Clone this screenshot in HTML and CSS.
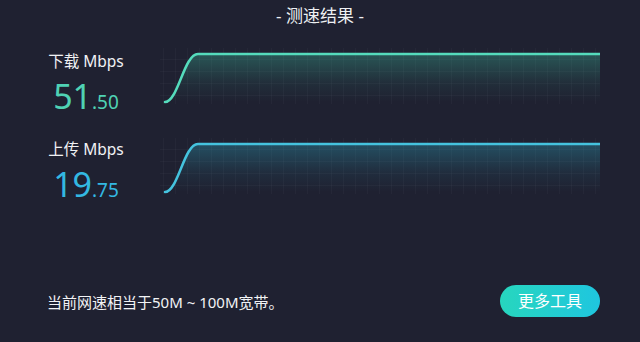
FILE: index.html
```html
<!DOCTYPE html>
<html lang="zh">
<head>
<meta charset="utf-8">
<link rel="stylesheet" href="styles.css">
</head>
<body>
<div class="page">
  <div class="title">- 测速结果 -</div>

  <div class="row row-down">
    <div class="stat">
      <div class="label">下载 Mbps</div>
      <div class="value down"><span class="int">51</span><span class="dec">.50</span></div>
    </div>
    <svg class="chart" width="440" height="60" viewBox="0 0 440 60">
      <defs>
        <pattern id="grid" width="12" height="12" patternUnits="userSpaceOnUse" x="4" y="2">
          <path d="M12 0 V12 M0 12 H12" fill="none" stroke="rgba(255,255,255,0.05)" stroke-width="1"/>
        </pattern>
        <linearGradient id="fillDown" x1="0" y1="0" x2="0" y2="1">
          <stop offset="0" stop-color="#3fc9a6" stop-opacity="0.32"/>
          <stop offset="0.6" stop-color="#3fc9a6" stop-opacity="0.08"/>
          <stop offset="1" stop-color="#3fc9a6" stop-opacity="0"/>
        </linearGradient>
      </defs>
      <rect x="0" y="2" width="440" height="56" fill="url(#grid)"/>
      <path d="M5 56 C18 56 24 8 38 8 L440 8 L440 56 Z" fill="url(#fillDown)"/>
      <path d="M5 56 C18 56 24 8 38 8 L440 8" fill="none" stroke="#55dbbc" stroke-width="2.5" stroke-linecap="round"/>
    </svg>
  </div>

  <div class="row row-up">
    <div class="stat">
      <div class="label">上传 Mbps</div>
      <div class="value up"><span class="int">19</span><span class="dec">.75</span></div>
    </div>
    <svg class="chart" width="440" height="60" viewBox="0 0 440 60">
      <defs>
        <pattern id="grid2" width="12" height="12" patternUnits="userSpaceOnUse" x="4" y="2">
          <path d="M12 0 V12 M0 12 H12" fill="none" stroke="rgba(255,255,255,0.05)" stroke-width="1"/>
        </pattern>
        <linearGradient id="fillUp" x1="0" y1="0" x2="0" y2="1">
          <stop offset="0" stop-color="#2fb3cc" stop-opacity="0.32"/>
          <stop offset="0.6" stop-color="#2fb3cc" stop-opacity="0.08"/>
          <stop offset="1" stop-color="#2fb3cc" stop-opacity="0"/>
        </linearGradient>
      </defs>
      <rect x="0" y="2" width="440" height="56" fill="url(#grid2)"/>
      <path d="M5 56 C18 56 24 8 38 8 L440 8 L440 56 Z" fill="url(#fillUp)"/>
      <path d="M5 56 C18 56 24 8 38 8 L440 8" fill="none" stroke="#45c3de" stroke-width="2.5" stroke-linecap="round"/>
    </svg>
  </div>

  <div class="footer">
    <div class="note">当前网速相当于50M ~ 100M宽带。</div>
    <div class="btn">更多工具</div>
  </div>
</div>
</body>
</html>
```

FILE: styles.css
```css
html, body {
  margin: 0;
  padding: 0;
  background: #1f2131;
}
.page {
  width: 640px;
  height: 342px;
  background: #1f2131;
  color: #f2f3f5;
  font-family: "Noto Sans", "Noto Sans CJK SC", sans-serif;
  overflow: hidden;
}
.title {
  height: 32px;
  line-height: 32px;
  text-align: center;
  font-size: 17px;
  color: #eef0f3;
}
.row {
  display: flex;
  height: 60px;
}
.row-down {
  margin-top: 14px;
}
.row-up {
  margin-top: 30px;
}
.stat {
  width: 80px;
  margin-left: 46px;
  margin-right: 34px;
  display: flex;
  flex-direction: column;
  align-items: center;
}
.label {
  margin-top: 4px;
  font-size: 15.5px;
  line-height: 22px;
  white-space: nowrap;
  color: #f0f1f4;
}
.row-up .label {
  margin-top: 2px;
}
.value {
  margin-top: 5px;
  line-height: 38px;
  white-space: nowrap;
}
.value .int {
  font-size: 34px;
}
.value .dec {
  font-size: 19px;
}
.value.down {
  color: #4fd2b4;
}
.value.up {
  color: #33b8e2;
}
.chart {
  display: block;
}
.footer {
  display: flex;
  justify-content: space-between;
  align-items: center;
  margin-top: 89px;
  padding: 0 40px 0 47px;
}
.note {
  font-size: 15px;
  color: #f2f3f5;
}
.btn {
  width: 100px;
  height: 32px;
  line-height: 32px;
  border-radius: 16px;
  text-align: center;
  font-size: 16px;
  color: #ffffff;
  background: linear-gradient(90deg, #27d6be, #1fc6df);
}
```
